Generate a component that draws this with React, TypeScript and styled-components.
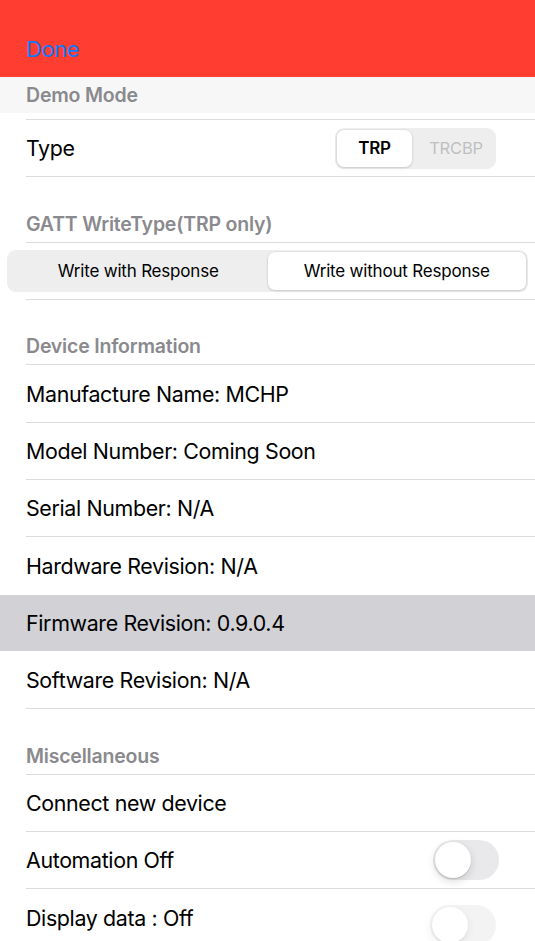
import React from "react";
import styled, { createGlobalStyle } from "styled-components";

const Global = createGlobalStyle`
  html, body { margin: 0; padding: 0; background: #ffffff; }
  body { font-family: Inter, "Noto Sans", "Liberation Sans", sans-serif; -webkit-font-smoothing: antialiased; }
  * { box-sizing: border-box; }
`;

const Page = styled.div`
  width: 535px;
  height: 941px;
  overflow: hidden;
  background: #ffffff;
  display: flex;
  flex-direction: column;
`;

const NavBar = styled.div`
  height: 77px;
  flex: none;
  background: #ff3d30;
  display: flex;
  align-items: flex-end;
  padding: 0 0 17px 26px;
`;

const DoneButton = styled.span`
  color: #0a7aff;
  font-size: 22px;
  line-height: 22px;
  letter-spacing: -0.4px;
`;

const SectionHeader = styled.div<{ $sticky?: boolean }>`
  flex: none;
  height: ${(p) => (p.$sticky ? "36px" : "64.4px")};
  margin-bottom: ${(p) => (p.$sticky ? "6px" : "0")};
  background: ${(p) => (p.$sticky ? "#f7f7f7" : "#ffffff")};
  display: flex;
  align-items: flex-end;
  padding: 0 0 8px 26px;
  color: #8a8a8e;
  font-size: 19.5px;
  line-height: 19px;
  font-weight: 600;
  letter-spacing: -0.2px;
`;

const Separator = styled.div<{ $hidden?: boolean }>`
  flex: none;
  height: 1px;
  margin-left: 26px;
  background: ${(p) => (p.$hidden ? "transparent" : "#dcdcde")};
`;

const Row = styled.div<{ $highlight?: boolean; $full?: boolean }>`
  flex: none;
  height: 56.33px;
  display: flex;
  align-items: center;
  justify-content: space-between;
  padding: ${(p) => (p.$full ? "0 7px 0 7px" : "0 36px 0 26px")};
  background: ${(p) => (p.$highlight ? "#d1d1d6" : "#ffffff")};
`;

const Label = styled.span`
  color: #000000;
  font-size: 21.4px;
  line-height: 22px;
  letter-spacing: -0.35px;
`;

const Segmented = styled.div<{ $full?: boolean }>`
  display: flex;
  align-items: stretch;
  padding: 2px;
  background: #eeeeef;
  border-radius: 9px;
  height: ${(p) => (p.$full ? "42px" : "41px")};
  margin-right: ${(p) => (p.$full ? "0" : "3px")};
  flex: ${(p) => (p.$full ? "1" : "none")};
`;

const Segment = styled.div<{ $selected?: boolean; $width?: number; $bold?: boolean; $dim?: boolean }>`
  ${(p) => (p.$width ? `width: ${p.$width}px;` : "flex: 1;")}
  display: flex;
  align-items: center;
  justify-content: center;
  padding-left: ${(p) => (p.$dim ? "6px" : "0")};
  border-radius: 7px;
  background: ${(p) => (p.$selected ? "#ffffff" : "transparent")};
  box-shadow: ${(p) =>
    p.$selected ? "0 1px 3px rgba(0,0,0,0.14), 0 0 0 0.5px rgba(0,0,0,0.06)" : "none"};
  color: ${(p) => (p.$dim ? "#bfbfc2" : "#000000")};
  font-size: ${(p) => (p.$bold ? "17px" : p.$dim ? "16.5px" : "17px")};
  font-weight: ${(p) => (p.$bold ? 600 : 400)};
  letter-spacing: -0.2px;
`;

const Track = styled.div<{ $faded?: boolean }>`
  width: 66px;
  height: 40px;
  border-radius: 20px;
  background: #e9e9eb;
  display: flex;
  align-items: center;
  padding: 2px;
  opacity: ${(p) => (p.$faded ? 0.5 : 1)};
  margin-right: ${(p) => (p.$faded ? "3px" : "0")};
  margin-top: ${(p) => (p.$faded ? "14px" : "0")};
`;

const Knob = styled.div`
  width: 36px;
  height: 36px;
  border-radius: 50%;
  background: #ffffff;
  box-shadow: 0 3px 8px rgba(0, 0, 0, 0.15), 0 1px 1px rgba(0, 0, 0, 0.12);
`;

const Toggle = ({ faded }: { faded?: boolean }) => (
  <Track $faded={faded}>
    <Knob />
  </Track>
);

const infoRows = [
  "Manufacture Name: MCHP",
  "Model Number: Coming Soon",
  "Serial Number: N/A",
  "Hardware Revision: N/A",
  "Firmware Revision: 0.9.0.4",
  "Software Revision: N/A",
];

export default function App() {
  return (
    <Page>
      <Global />
      <NavBar>
        <DoneButton>Done</DoneButton>
      </NavBar>

      <SectionHeader $sticky>Demo Mode</SectionHeader>
      <Separator />
      <Row>
        <Label>Type</Label>
        <Segmented>
          <Segment $selected $bold $width={75}>TRP</Segment>
          <Segment $dim $width={82}>TRCBP</Segment>
        </Segmented>
      </Row>
      <Separator />

      <SectionHeader>GATT WriteType(TRP only)</SectionHeader>
      <Separator />
      <Row $full>
        <Segmented $full>
          <Segment>Write with Response</Segment>
          <Segment $selected>Write without Response</Segment>
        </Segmented>
      </Row>
      <Separator />

      <SectionHeader>Device Information</SectionHeader>
      <Separator />
      {infoRows.map((text, i) => {
        const hl = text.startsWith("Firmware");
        const nextHl = infoRows[i + 1]?.startsWith("Firmware");
        return (
          <React.Fragment key={text}>
            <Row $highlight={hl}>
              <Label>{text}</Label>
            </Row>
            <Separator $hidden={hl || nextHl} />
          </React.Fragment>
        );
      })}

      <SectionHeader>Miscellaneous</SectionHeader>
      <Separator />
      <Row>
        <Label>Connect new device</Label>
      </Row>
      <Separator />
      <Row>
        <Label>Automation Off</Label>
        <Toggle />
      </Row>
      <Separator />
      <Row>
        <Label>Display data : Off</Label>
        <Toggle faded />
      </Row>
    </Page>
  );
}
